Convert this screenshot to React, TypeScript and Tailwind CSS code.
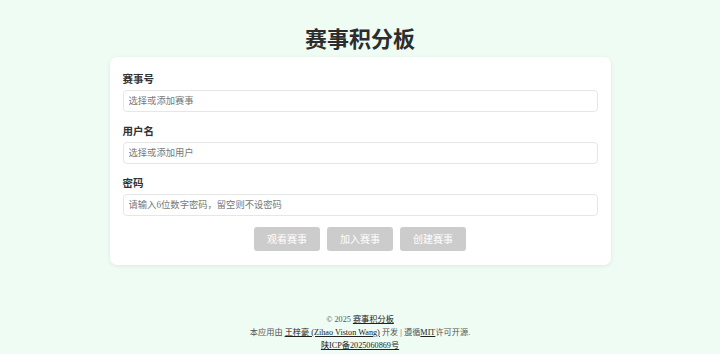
import React from "react";

const font = { fontFamily: '"Liberation Serif", "Noto Sans CJK SC", serif' };

export default function App() {
  const fields = [
    { label: "赛事号", placeholder: "选择或添加赛事" },
    { label: "用户名", placeholder: "选择或添加用户" },
    { label: "密码", placeholder: "请输入6位数字密码，留空则不设密码" },
  ];

  return (
    <div className="min-h-[354px] bg-[#effcf3] flex flex-col items-center text-[#333]" style={font}>
      <h1 className="mt-[27px] text-[22px] leading-[26px] font-bold text-[#2d2d2d]">赛事积分板</h1>

      <div className="mt-[4px] w-[501px] bg-white rounded-[7px] shadow-[0_1px_4px_rgba(0,0,0,0.08)] px-[13px] pt-[16px] pb-[14px]">
        {fields.map((f) => (
          <div key={f.label} className="mb-[13px]">
            <label className="block text-[10.5px] leading-[14px] font-bold text-[#333]">{f.label}</label>
            <input
              className="w-full h-[22px] border border-[#e6e6e6] rounded-[4px] px-[5px] text-[9.3px] outline-none placeholder:text-[#777]"
              placeholder={f.placeholder}
              style={font}
            />
          </div>
        ))}
        <div className="flex justify-center gap-[7px] -mt-[2px]">
          {["观看赛事", "加入赛事", "创建赛事"].map((b) => (
            <button
              key={b}
              className="w-[66px] h-[24px] bg-[#cccccc] rounded-[3px] text-white text-[10px]"
              style={font}
            >
              {b}
            </button>
          ))}
        </div>
      </div>

      <footer className="mt-[48px] text-[8.2px] leading-[13px] text-[#555] text-center">
        <div>
          © 2025 <a className="underline text-[#222]">赛事积分板</a>
        </div>
        <div>
          本应用由 <a className="underline text-[#222]">王梓豪 (Zihao Viston Wang)</a> 开发 | 遵循<a className="underline text-[#222]">MIT</a>许可开源.
        </div>
        <div>
          <a className="underline text-[#222]">陕ICP备2025060869号</a>
        </div>
      </footer>
    </div>
  );
}
